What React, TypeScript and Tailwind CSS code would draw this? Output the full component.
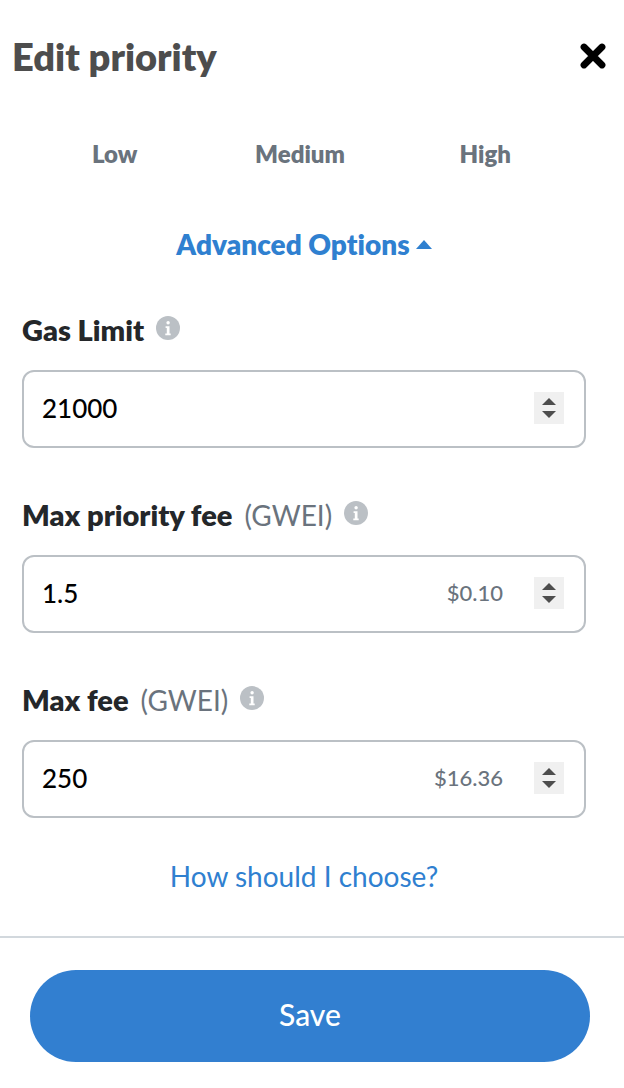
import { useState } from 'react';

const priorities = ['Low', 'Medium', 'High'];

function CloseIcon() {
  return (
    <svg viewBox="0 0 26 26" className="h-[26px] w-[26px]" fill="none" stroke="currentColor" strokeWidth="6.8" strokeLinecap="round" aria-hidden="true">
      <path d="M4 4 22 22M22 4 4 22" />
    </svg>
  );
}

function InfoIcon() {
  return (
    <svg viewBox="0 0 24 24" className="h-6 w-6" aria-hidden="true">
      <circle cx="12" cy="12" r="12" fill="#bbc0c5" />
      <circle cx="12.1" cy="6.7" r="1.7" fill="#fff" />
      <path d="M9.6 10.2h3.9v7.2h1.2v1.8H9.3v-1.8h1.5v-5.4H9.6z" fill="#fff" />
    </svg>
  );
}

function Stepper({ name, onStep }: { name: string; onStep: (delta: number) => void }) {
  return (
    <div className="flex h-8 w-[30px] shrink-0 flex-col bg-[#f0f0f0] text-[#4d4d4d]">
      <button type="button" aria-label={`Increase ${name}`} onClick={() => onStep(1)} className="flex flex-1 items-end justify-center pb-0.5">
        <svg viewBox="0 0 14 7" className="h-[7px] w-3.5" fill="currentColor" aria-hidden="true">
          <path d="M7 0 14 7H0z" />
        </svg>
      </button>
      <button type="button" aria-label={`Decrease ${name}`} onClick={() => onStep(-1)} className="flex flex-1 items-start justify-center pt-1">
        <svg viewBox="0 0 14 7" className="h-[7px] w-3.5" fill="currentColor" aria-hidden="true">
          <path d="M0 0h14L7 7z" />
        </svg>
      </button>
    </div>
  );
}

type FieldProps = {
  id: string;
  label: string;
  unit?: string;
  initial: number;
  fiat?: string;
};

function Field({ id, label, unit, initial, fiat }: FieldProps) {
  const [value, setValue] = useState(String(initial));

  return (
    <div className="flex flex-col gap-5">
      <div className="flex h-10 items-center gap-3">
        <label htmlFor={id} className="flex items-baseline gap-3 leading-10">
          <span className="text-[29px] font-extrabold text-[#24272a]">{label}</span>
          {unit && <span className="text-[28px] text-[#6a737d]">({unit})</span>}
        </label>
        <button type="button" aria-label={`About ${label}`} className="mb-1">
          <InfoIcon />
        </button>
      </div>
      <div className="flex h-[78px] items-center rounded-xl border-2 border-[#bbc0c5] pr-5 pb-0.5 pl-[18px]">
        <input
          id={id}
          type="text"
          inputMode="decimal"
          value={value}
          onChange={(e) => setValue(e.target.value)}
          className="w-full min-w-0 flex-1 bg-transparent text-[26px] leading-10 font-medium text-black outline-none"
        />
        {fiat && <span className="pr-[31px] text-[22px] leading-10 font-medium text-[#6a737d]">{fiat}</span>}
        <Stepper name={label} onStep={(delta) => setValue(String(Number(value) + delta))} />
      </div>
    </div>
  );
}

export default function App() {
  const [open, setOpen] = useState(true);

  return (
    <div className="min-h-screen w-full bg-white font-['Lato',sans-serif] [font-variant-ligatures:none]">
      <header className="flex h-28 items-center justify-between pr-[18px] pl-3">
        <h1 className="text-[38px] leading-10 font-extrabold text-[#4d4d4d]">Edit priority</h1>
        <button type="button" aria-label="Close" className="text-black">
          <CloseIcon />
        </button>
      </header>

      <main className="flex flex-col pr-[38px] pl-[22px]">
        <div className="grid grid-cols-3 pt-[22px] pr-2">
          {priorities.map((p) => (
            <button key={p} type="button" className="text-2xl leading-10 font-extrabold text-[#6a737d]">
              {p}
            </button>
          ))}
        </div>

        <button
          type="button"
          aria-expanded={open}
          onClick={() => setOpen(!open)}
          className="mt-[50px] flex items-center justify-center gap-1.5 text-[28px] leading-10 font-extrabold text-[#2f80d0]"
        >
          Advanced Options
          <svg viewBox="0 0 16 9" className="h-[9px] w-4" fill="currentColor" aria-hidden="true">
            <path d="M8 0 16 9H0z" />
          </svg>
        </button>

        {open && (
          <div className="flex flex-col gap-[47px] pt-[46px]">
            <Field id="gas-limit" label="Gas Limit" initial={21000} />
            <Field id="max-priority-fee" label="Max priority fee" unit="GWEI" initial={1.5} fiat="$0.10" />
            <Field id="max-fee" label="Max fee" unit="GWEI" initial={250} fiat="$16.36" />
          </div>
        )}

        <a href="#how" className="mt-[38px] mb-10 self-center text-[28px] leading-10 text-[#2f80d0]">
          How should I choose?
        </a>
      </main>

      <footer className="border-t-2 border-[#d2d8dd] pt-8 pr-[34px] pb-[26px] pl-[30px]">
        <button type="button" className="h-[92px] w-full rounded-full bg-[#327fd0] pb-1 text-[30px] font-medium text-white">
          Save
        </button>
      </footer>
    </div>
  );
}
